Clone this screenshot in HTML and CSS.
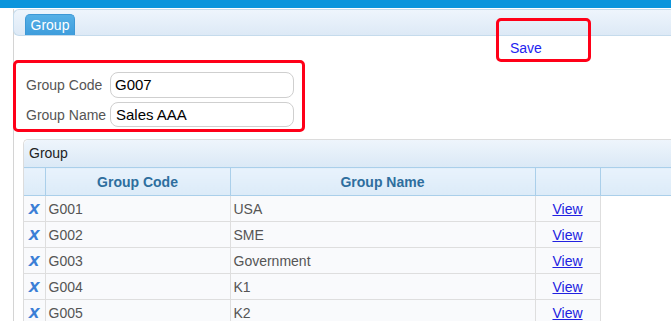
FILE: index.html
```html
<!DOCTYPE html>
<html>
<head>
<meta charset="utf-8">
<link rel="stylesheet" href="styles.css">
</head>
<body>
<div class="topbar"></div>
<div class="panel">
  <div class="tabs">
    <span class="tab">Group</span>
  </div>
  <div class="save-box"><a class="save" href="#">Save</a></div>
  <div class="form-box">
    <div class="form-row">
      <label class="lbl">Group Code</label>
      <div class="input">G007</div>
    </div>
    <div class="form-row">
      <label class="lbl">Group Name</label>
      <div class="input input2">Sales AAA</div>
    </div>
  </div>
  <div class="grid">
    <div class="grid-title">Group</div>
    <table class="tbl">
      <colgroup>
        <col class="c-del"><col class="c-code"><col class="c-name"><col class="c-view"><col class="c-rest">
      </colgroup>
      <thead>
        <tr><th></th><th>Group Code</th><th>Group Name</th><th></th><th></th></tr>
      </thead>
      <tbody>
        <tr><td class="del">X</td><td>G001</td><td>USA</td><td class="vw"><a href="#">View</a></td><td class="empty"></td></tr>
        <tr><td class="del">X</td><td>G002</td><td>SME</td><td class="vw"><a href="#">View</a></td><td class="empty"></td></tr>
        <tr><td class="del">X</td><td>G003</td><td>Government</td><td class="vw"><a href="#">View</a></td><td class="empty"></td></tr>
        <tr><td class="del">X</td><td>G004</td><td>K1</td><td class="vw"><a href="#">View</a></td><td class="empty"></td></tr>
        <tr><td class="del">X</td><td>G005</td><td>K2</td><td class="vw"><a href="#">View</a></td><td class="empty"></td></tr>
      </tbody>
    </table>
  </div>
</div>
</body>
</html>
```
FILE: styles.css
```css
html, body {
  margin: 0;
  padding: 0;
  overflow: hidden;
  background: #fff;
  font-family: "Liberation Sans", Arial, sans-serif;
  font-size: 14px;
}
.topbar {
  height: 8px;
  background: #0b95dc;
}
.panel {
  position: relative;
  margin-top: 1px;
  margin-left: 13px;
  border-left: 1px solid #d4d4d4;
  height: 400px;
  width: 900px;
}
.tabs {
  height: 21px;
  margin-left: -1px;
  padding: 4px 0 0 11px;
  border: 1px solid #c5dbec;
  border-right: none;
  border-radius: 6px 0 0 6px;
  background: linear-gradient(#eef5fc, #dde9f6);
  display: flex;
  align-items: flex-end;
}
.tab {
  display: block;
  width: 48px;
  height: 20px;
  line-height: 21px;
  text-align: center;
  color: #fff;
  font-size: 14px;
  background: linear-gradient(#56b0e6, #3e9ddc);
  border: 1px solid #3d98d6;
  border-bottom: none;
  border-radius: 5px 5px 0 0;
}
.save-box {
  position: absolute;
  left: 482px;
  top: 9px;
  width: 89px;
  height: 38px;
  border: 3px solid #ff0018;
  border-radius: 5px;
}
.save {
  position: absolute;
  left: 11px;
  top: 19px;
  color: #2323f0;
  text-decoration: none;
  font-size: 14px;
}
.form-box {
  margin-top: 24px;
  margin-left: -1px;
  width: 286px;
  height: 57px;
  padding: 9px 0 0 0;
  border: 3px solid #ff0018;
  border-radius: 5px;
  display: flex;
  flex-direction: column;
  gap: 4px;
}
.form-row {
  display: flex;
  align-items: center;
}
.lbl {
  width: 94px;
  flex: none;
  padding-left: 10px;
  color: #555;
  font-size: 14px;
  box-sizing: border-box;
  white-space: nowrap;
}
.input {
  width: 184px;
  flex: none;
  height: 26px;
  box-sizing: border-box;
  border: 1px solid #cfcfcf;
  border-radius: 8px;
  padding-left: 4px;
  line-height: 24px;
  font-size: 15px;
  color: #000;
}
.input2 {
  height: 25px;
  line-height: 23px;
  padding-left: 5px;
}
.grid {
  margin-top: 7px;
  margin-left: 9px;
  border: 1px solid #dcdcdc;
  border-right: none;
  border-bottom: none;
  border-radius: 5px 0 0 0;
  width: 800px;
}
.grid-title {
  height: 27px;
  line-height: 27px;
  padding-left: 5px;
  color: #222;
  font-size: 14px;
  background: linear-gradient(#eef5fc, #dbe9f6);
  border-top-left-radius: 5px;
}
.tbl {
  border-collapse: collapse;
  table-layout: fixed;
  width: 776px;
}
.c-del { width: 21px; }
.c-code { width: 185px; }
.c-name { width: 305px; }
.c-view { width: 65px; }
.c-rest { width: 200px; }
.tbl th {
  height: 27px;
  padding: 0;
  border: 1px solid #aacfea;
  background: linear-gradient(#e8f2fc, #dcebf8);
  color: #2e6e9e;
  font-weight: bold;
  font-size: 14px;
  text-align: center;
}
.tbl th:first-child { border-left: none; }
.tbl td {
  height: 25px;
  padding: 0 0 0 3px;
  border: 1px solid #dedede;
  background: #f9fafc;
  color: #555;
  font-size: 14px;
  white-space: nowrap;
}
.tbl td:first-child { border-left: none; }
.tbl td.del {
  padding: 0;
  text-align: center;
  color: #3b7fd6;
  font-weight: bold;
  font-style: italic;
  font-size: 14px;
  font-family: "DejaVu Sans", sans-serif;
}
.tbl td.vw {
  padding: 0;
  text-align: center;
}
.tbl td.vw a {
  color: #2121e0;
  text-decoration: underline;
}
.tbl td.empty {
  background: #fff;
  border: none;
  border-left: 1px solid #dedede;
}
```
